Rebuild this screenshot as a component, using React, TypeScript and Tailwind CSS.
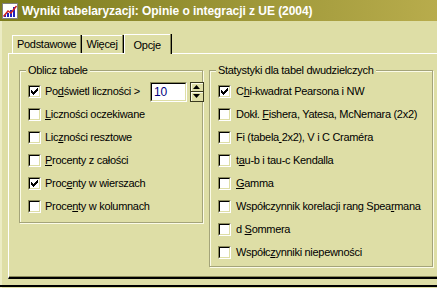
const FONT = { fontFamily: '"Liberation Sans", Arial, sans-serif' };

function Label({ text, u }: { text: string; u: number }) {
  return (
    <span className="whitespace-nowrap">
      {text.slice(0, u)}
      <span className="underline underline-offset-[1px]">{text[u]}</span>
      {text.slice(u + 1)}
    </span>
  );
}

function CheckBox({ checked }: { checked?: boolean }) {
  return (
    <span className="box-border flex h-[13px] w-[13px] shrink-0 border-t border-l border-[#8c8c5c] border-r-white border-b-white border-r border-b">
      <span className="flex flex-1 items-center justify-center border-t border-l border-black border-r border-b border-r-[#dedea6] border-b-[#dedea6] bg-white">
        {checked && (
          <svg width="7" height="7" viewBox="0 0 7 7" shapeRendering="crispEdges">
            <path d="M0 2h1v3H0zM1 3h1v3H1zM2 4h1v3H2zM3 3h1v3H3zM4 2h1v3H4zM5 1h1v3H5zM6 0h1v3H6z" fill="#000" />
          </svg>
        )}
      </span>
    </span>
  );
}

function Row({ text, u, checked, gap = "gap-[4px]" }: { text: string; u: number; checked?: boolean; gap?: string }) {
  return (
    <div className={`flex h-[23px] items-center ${gap}`}>
      <CheckBox checked={checked} />
      <Label text={text} u={u} />
    </div>
  );
}

function GroupBox({ title, className, children }: { title: string; className: string; children: React.ReactNode }) {
  return (
    <div className={`relative box-border border border-[#a4a47a] shadow-[inset_1px_1px_0_#fbfbe8,1px_1px_0_#fbfbe8] ${className}`}>
      <span className="absolute -top-[8px] left-[6px] bg-[#dedea6] px-[2px] leading-[14px] whitespace-nowrap">{title}</span>
      {children}
    </div>
  );
}

function Spinner() {
  return (
    <div className="ml-[6px] flex items-center gap-[3px] tracking-normal">
      <div className="box-border flex h-[20px] w-[37px] border-t border-l border-[#8c8c5c] border-r border-b border-r-white border-b-white">
        <div className="flex flex-1 items-center border-t border-l border-black border-r border-b border-r-[#dedea6] border-b-[#dedea6] bg-white pl-[2px] text-[12px] text-[#000080]">
          10
        </div>
      </div>
      <div className="box-border flex h-[20px] w-[14px] flex-col border border-[#3a3a20] bg-[#dedea6]">
        <div className="flex flex-1 items-center justify-center border-b border-[#3a3a20] shadow-[inset_1px_1px_0_#fbfbe8]">
          <svg width="7" height="4" viewBox="0 0 7 4"><path d="M3.5 0L7 4H0z" fill="#000" /></svg>
        </div>
        <div className="flex flex-1 items-center justify-center shadow-[inset_1px_1px_0_#fbfbe8]">
          <svg width="7" height="4" viewBox="0 0 7 4"><path d="M0 0h7L3.5 4z" fill="#000" /></svg>
        </div>
      </div>
    </div>
  );
}

function AppIcon() {
  return (
    <svg width="16" height="16" viewBox="0 0 16 16" shapeRendering="crispEdges">
      <rect x="0.5" y="0.5" width="15" height="15" fill="#fff" stroke="#808080" />
      <path d="M2 14V12h2v2zM5 14V10h2v4zM8 14V7h2v7zM11 14V4h2v10z" fill="#2020c0" />
      <path d="M1.5 13.5L6 8l3 2 5.5-7" stroke="#d02020" strokeWidth="1.5" fill="none" shapeRendering="auto" />
    </svg>
  );
}

export default function App() {
  return (
    <div style={FONT} className="relative h-[288px] w-[437px] overflow-hidden bg-[#dedea6] text-[11px] tracking-[-0.3px] text-black">
      <div className="flex h-[21px] items-center gap-[4px] bg-gradient-to-r from-[#7c7c1c] to-[#b8ac4c] pl-[2px]">
        <AppIcon />
        <span className="text-[12px] font-bold tracking-[-0.05px] whitespace-nowrap text-white">
          Wyniki tabelaryzacji: Opinie o integracji z UE (2004)
        </span>
      </div>

      <div className="border-l-2 border-[#ececc4] pt-[14px] pl-[6px]">
        <div className="flex h-[18px] items-end pl-[4px]">
          <div className="flex h-[18px] items-center border-t border-l border-white px-[4px] pr-[4px]">
            <span className="pb-[1px]">Podstawowe</span>
          </div>
          <div className="h-[18px] w-[2px] border-r border-black bg-[#8c8c5c] border-l border-l-transparent" />
          <div className="flex h-[18px] items-center border-t border-white px-[4px]">
            <span className="pb-[1px]">Więcej</span>
          </div>
          <div className="h-[18px] w-[2px] border-r border-black bg-[#8c8c5c]" />
          <div className="relative z-10 -mb-[1px] flex h-[20px] items-center border-t border-l border-white bg-[#dedea6] pr-[9px] pl-[9px]">
            <span className="pt-[2px]">Opcje</span>
          </div>
          <div className="-mb-[1px] h-[20px] w-[2px] border-r border-black bg-[#8c8c5c]" />
        </div>

        <div className="box-border flex h-[226px] w-[440px] gap-[6px] border-t border-l border-white border-b-2 border-b-black pt-[16px] pl-[10px] shadow-[inset_0_-1px_0_#8c8c5c]">
          <GroupBox title="Oblicz tabele" className="h-[153px] w-[184px] pt-[9px] pl-[8px]">
            <div className="flex h-[23px] items-center gap-[4px]">
              <CheckBox checked />
              <Label text="Podświetl liczności >" u={2} />
              <Spinner />
            </div>
            <Row text="Liczności oczekiwane" u={0} />
            <Row text="Liczności resztowe" u={3} />
            <Row text="Procenty z całości" u={0} />
            <Row text="Procenty w wierszach" u={4} checked />
            <Row text="Procenty w kolumnach" u={5} />
          </GroupBox>

          <GroupBox title="Statystyki dla tabel dwudzielczych" className="h-[197px] w-[224px] pt-[9px] pl-[8px]">
            <Row gap="gap-[5px]" text="Chi-kwadrat Pearsona i NW" u={1} checked />
            <Row gap="gap-[5px]" text="Dokł. Fishera, Yatesa, McNemara (2x2)" u={6} />
            <Row gap="gap-[5px]" text="Fi (tabela 2x2), V i C Craméra" u={10} />
            <Row gap="gap-[5px]" text="tau-b i tau-c Kendalla" u={1} />
            <Row gap="gap-[5px]" text="Gamma" u={0} />
            <Row gap="gap-[5px]" text="Współczynnik korelacji rang Spearmana" u={32} />
            <Row gap="gap-[5px]" text="d Sommera" u={2} />
            <Row gap="gap-[5px]" text="Współczynniki niepewności" u={6} />
          </GroupBox>
        </div>
        <div className="-ml-[8px] mt-[6px] h-[3px] border-t-2 border-black" />
      </div>
    </div>
  );
}
